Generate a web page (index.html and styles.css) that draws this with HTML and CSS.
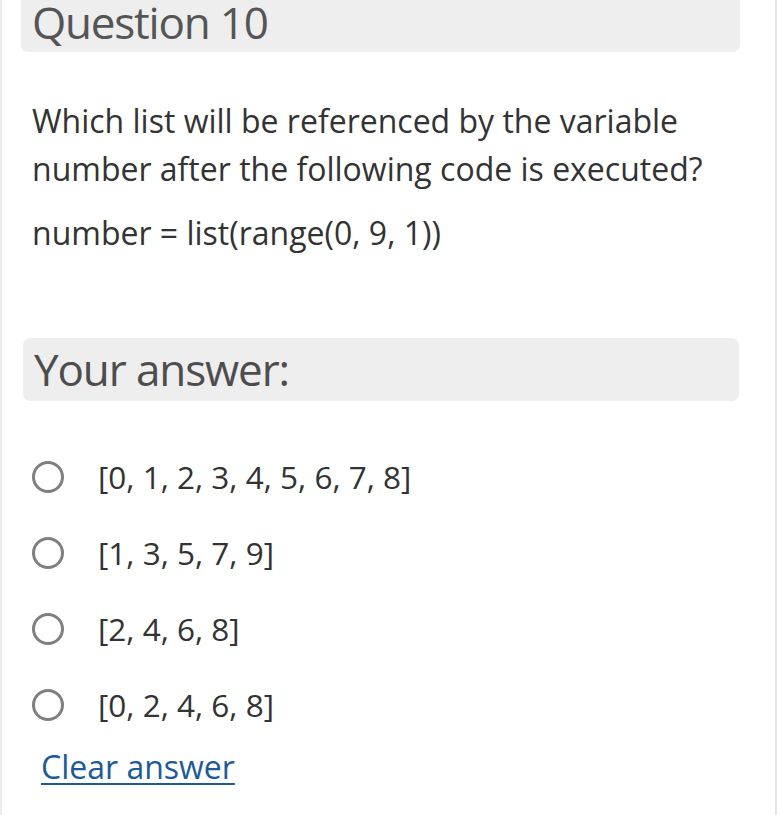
FILE: index.html
```html
<!DOCTYPE html>
<html>
<head>
<meta charset="utf-8">
<link rel="stylesheet" href="styles.css">
</head>
<body>
<div class="page">
  <main class="main">
    <div class="qhead">Question 10</div>
    <div class="qbody">
      <p class="qtext">Which list will be referenced by the variable number after the following code is executed?</p>
      <p class="qcode">number = list(range(0, 9, 1))</p>
    </div>
    <div class="ahead">Your answer:</div>
    <ul class="options">
      <li class="option"><span class="radio"></span><span class="label">[0, 1, 2, 3, 4, 5, 6, 7, 8]</span></li>
      <li class="option"><span class="radio"></span><span class="label">[1, 3, 5, 7, 9]</span></li>
      <li class="option"><span class="radio"></span><span class="label">[2, 4, 6, 8]</span></li>
      <li class="option"><span class="radio"></span><span class="label">[0, 2, 4, 6, 8]</span></li>
    </ul>
    <a class="clear" href="#">Clear answer</a>
  </main>
  <div class="gutter"></div>
</div>
</body>
</html>
```
FILE: styles.css
```css
html, body {
  margin: 0;
  padding: 0;
  background: #ffffff;
}
body {
  font-family: "Open Sans", "DejaVu Sans", sans-serif;
  color: #333333;
  width: 777px;
  height: 815px;
  overflow: hidden;
}
.page {
  display: flex;
  height: 815px;
}
.main {
  width: 758px;
  border-left: 2px solid #ececec;
  padding-left: 19px;
  padding-right: 0;
  display: flex;
  flex-direction: column;
  align-items: flex-start;
}
.gutter {
  flex: 1;
  border-left: 2px solid #e6e6e6;
  background: #f1f1f1;
}
.qhead {
  width: 708px;
  height: 52px;
  background: #eeeeee;
  border-radius: 0 0 7px 7px;
  padding-left: 11px;
  font-size: 44px;
  line-height: 44px;
  letter-spacing: -1.2px;
  color: #555555;
  box-sizing: content-box;
  margin-top: 0;
}
.qbody {
  padding-left: 11px;
  margin-top: 45px;
  width: 700px;
}
.qtext {
  margin: 0;
  font-size: 32px;
  line-height: 48px;
}
.qcode {
  margin: 16px 0 0 0;
  font-size: 32px;
  line-height: 48px;
}
.ahead {
  margin-top: 81px;
  margin-left: 2px;
  width: 705px;
  height: 63px;
  background: #eeeeee;
  border-radius: 7px;
  padding-left: 11px;
  font-size: 44px;
  line-height: 63px;
  letter-spacing: -1.1px;
  color: #4d4d4d;
}
.options {
  list-style: none;
  margin: 52px 0 0 0;
  padding: 0;
  display: flex;
  flex-direction: column;
  gap: 28px;
}
.option {
  display: flex;
  align-items: center;
  height: 48px;
}
.radio {
  width: 26px;
  height: 26px;
  border: 3px solid #7f7f7f;
  border-radius: 50%;
  margin-left: 11px;
  margin-right: 34px;
  box-sizing: content-box;
}
.label {
  font-size: 31.5px;
  line-height: 48px;
  color: #333333;
}
.clear {
  margin-top: 14px;
  margin-left: 20px;
  font-size: 32px;
  line-height: 48px;
  color: #1d5a98;
  text-decoration: underline;
  text-decoration-thickness: 2px;
  text-underline-offset: 4px;
}
```
